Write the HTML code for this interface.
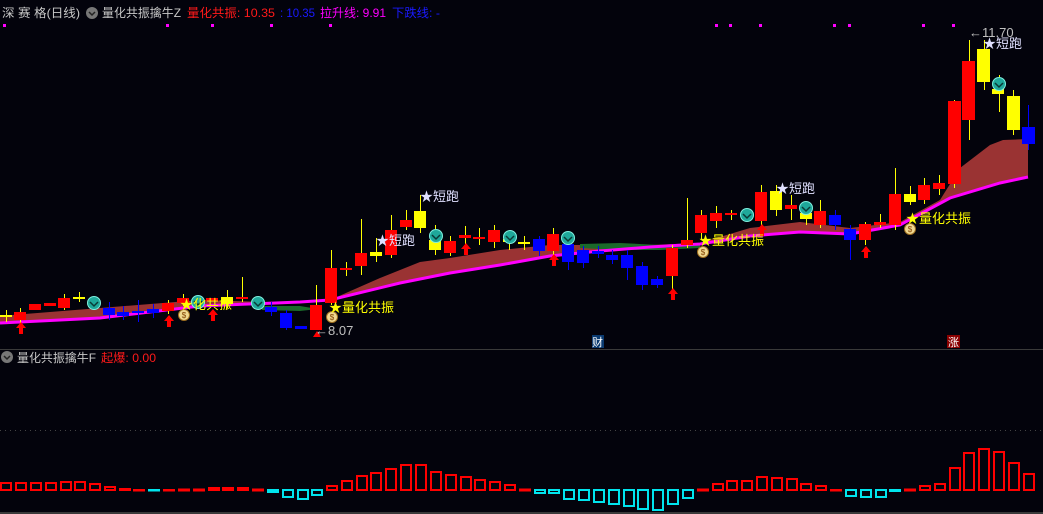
<!DOCTYPE html>
<html><head><meta charset="utf-8"><style>
html,body{margin:0;padding:0;background:#03030c;width:1043px;height:514px;overflow:hidden}
svg{display:block}
text{font-family:"Liberation Sans","Noto Sans CJK SC",sans-serif}
</style></head><body>
<svg width="1043" height="514" viewBox="0 0 1043 514" xmlns="http://www.w3.org/2000/svg">
<rect width="1043" height="514" fill="#03030c"/>
<!-- title -->
<text x="2" y="17" font-size="12" fill="#c8c8c8" textLength="78" lengthAdjust="spacingAndGlyphs">深 赛 格(日线)</text>
<circle cx="92" cy="13" r="6" fill="#777"/><path d="M89 12l3 3 3-3" stroke="#222" stroke-width="1.5" fill="none"/>
<text x="102" y="17" font-size="12" fill="#c8c8c8" textLength="79" lengthAdjust="spacingAndGlyphs">量化共振擒牛Z</text>
<text x="187" y="17" font-size="12" fill="#ff1a1a" textLength="88" lengthAdjust="spacingAndGlyphs">量化共振: 10.35</text>
<text x="280" y="17" font-size="12" fill="#1a1aff" textLength="35" lengthAdjust="spacingAndGlyphs">: 10.35</text>
<text x="320" y="17" font-size="12" fill="#ff00ff" textLength="66" lengthAdjust="spacingAndGlyphs">拉升线: 9.91</text>
<text x="392" y="17" font-size="12" fill="#1a1aff" textLength="48" lengthAdjust="spacingAndGlyphs">下跌线: -</text>
<g fill="#ff00ff">
<rect x="3" y="24" width="3" height="3"/><rect x="166" y="24" width="3" height="3"/><rect x="211" y="24" width="3" height="3"/><rect x="270" y="24" width="3" height="3"/><rect x="329" y="24" width="3" height="3"/>
<rect x="715" y="24" width="3" height="3"/><rect x="729" y="24" width="3" height="3"/><rect x="759" y="24" width="3" height="3"/><rect x="833" y="24" width="3" height="3"/><rect x="848" y="24" width="3" height="3"/><rect x="922" y="24" width="3" height="3"/><rect x="952" y="24" width="3" height="3"/>
</g>
<!-- ribbon -->
<path d="M0 316 L100 308 L200 300 L300 303 L330 300 L380 278 L420 262 L450 258 L500 250 L550 245 L600 245 L650 245 L700 243 L750 228 L800 222 L850 228 L900 222 L940 200 L960 168 L990 145 L1003 140 L1028 139 L1028 177 L1000 183 L950 198 L900 225 L850 234 L800 232 L750 236 L700 244 L650 247 L600 251 L550 256 L500 265 L450 273 L400 283 L330 300 L300 302 L200 306 L100 318 L0 323 Z" fill="#9a3333"/>
<path d="M580 244 L620 243 L660 245 L700 243 L700 248 L660 250 L620 250 L580 248Z" fill="#1a6a2a"/>
<path d="M262 306 L300 306 L318 309 L300 311 L262 310Z" fill="#1a6a2a"/>
<path d="M0 323 L100 318 L200 306 L300 302 L330 300 L400 283 L450 273 L500 265 L550 256 L600 251 L650 247 L700 244 L750 236 L800 232 L850 234 L900 225 L950 198 L1000 183 L1028 177" stroke="#ff00ff" stroke-width="3" fill="none"/>
<!-- candles: wicks -->
<g stroke-width="1" shape-rendering="crispEdges" transform="translate(0.5 0)">
<path stroke="#ff0" d="M6 310V322M20 308V324M64 294V310M79 292V302M168 300V314M183 294V306M227 290V308M242 277V302M316 285V330M331 250V305M346 262V276M361 219V275M376 238V262M391 215V258M406 210V230M420 195V233M435 225V255M450 236V256M465 226V248M479 228V245M494 225V248M509 235V250M524 236V250M553 228V262M672 245V300M687 198V248M701 210V240M716 206V228M731 210V220M761 185V230M776 185V216M791 195V220M806 203V225M820 200V228M865 222V245M880 214V228M895 168V230M910 186V205M924 178V204M939 175V195M954 100V188M969 40V140M984 40V90M999 75V112M1013 90V135"/>
<path stroke="#00f" d="M109 302V320M123 306V320M138 300V322M153 304V318M271 302V316M286 310V330M539 236V256M568 240V270M583 246V268M598 246V258M612 250V264M627 250V280M642 262V290M657 276V288M835 210V230M850 225V260M1028 105V150"/>
</g>
<g fill="#ff0000">
<rect x="14" y="312" width="12" height="8"/><rect x="29" y="304" width="12" height="6"/><rect x="44" y="303" width="12" height="3"/><rect x="58" y="298" width="12" height="10"/>
<rect x="162" y="303" width="12" height="8"/><rect x="177" y="298" width="12" height="5"/><rect x="206" y="298" width="12" height="3"/><rect x="236" y="297" width="12" height="2"/>
<rect x="310" y="305" width="12" height="25"/><rect x="325" y="268" width="12" height="35"/><rect x="340" y="268" width="12" height="2"/><rect x="355" y="253" width="12" height="13"/>
<rect x="385" y="230" width="12" height="25"/><rect x="400" y="220" width="12" height="7"/><rect x="444" y="241" width="12" height="12"/><rect x="459" y="235" width="12" height="3"/><rect x="473" y="237" width="12" height="2"/><rect x="488" y="230" width="12" height="12"/><rect x="547" y="234" width="12" height="17"/>
<rect x="666" y="248" width="12" height="28"/><rect x="681" y="240" width="12" height="5"/><rect x="695" y="215" width="12" height="18"/><rect x="710" y="213" width="12" height="8"/><rect x="725" y="213" width="12" height="2"/>
<rect x="755" y="192" width="12" height="29"/><rect x="785" y="205" width="12" height="4"/><rect x="814" y="211" width="12" height="14"/><rect x="859" y="224" width="12" height="16"/><rect x="874" y="222" width="12" height="3"/><rect x="889" y="194" width="12" height="31"/><rect x="918" y="185" width="12" height="15"/><rect x="933" y="183" width="12" height="6"/>
<rect x="948" y="101" width="13" height="83"/><rect x="962" y="61" width="13" height="59"/>
</g>
<g fill="#ffff00">
<rect x="0" y="315" width="12" height="2"/><rect x="73" y="297" width="12" height="2"/><rect x="221" y="297" width="12" height="7"/><rect x="370" y="252" width="12" height="4"/><rect x="414" y="211" width="12" height="17"/><rect x="429" y="240" width="12" height="10"/><rect x="503" y="239" width="12" height="3"/><rect x="518" y="242" width="12" height="2"/>
<rect x="770" y="191" width="12" height="19"/><rect x="800" y="213" width="12" height="6"/><rect x="904" y="194" width="12" height="8"/><rect x="977" y="49" width="13" height="33"/><rect x="992" y="89" width="12" height="5"/><rect x="1007" y="96" width="13" height="34"/>
</g>
<g fill="#0000ff">
<rect x="103" y="308" width="12" height="7"/><rect x="117" y="312" width="12" height="4"/><rect x="132" y="311" width="12" height="2"/><rect x="147" y="309" width="12" height="4"/><rect x="265" y="307" width="12" height="5"/><rect x="280" y="313" width="12" height="15"/><rect x="295" y="326" width="12" height="3"/>
<rect x="533" y="239" width="12" height="12"/><rect x="562" y="244" width="12" height="18"/><rect x="577" y="250" width="12" height="13"/><rect x="592" y="251" width="12" height="3"/><rect x="606" y="255" width="12" height="5"/><rect x="621" y="255" width="12" height="13"/><rect x="636" y="266" width="12" height="19"/><rect x="651" y="279" width="12" height="6"/>
<rect x="829" y="215" width="12" height="10"/><rect x="844" y="229" width="12" height="11"/><rect x="1022" y="127" width="13" height="17"/>
</g>
<!-- teal icons -->
<g fill="#1fa89a" stroke="#7ff0e0" stroke-width="1">
<circle cx="94" cy="303" r="6.5"/><circle cx="198" cy="302" r="6.5"/><circle cx="258" cy="303" r="6.5"/><circle cx="436" cy="236" r="6.5"/><circle cx="510" cy="237" r="6.5"/><circle cx="568" cy="238" r="6.5"/><circle cx="747" cy="215" r="6.5"/><circle cx="806" cy="208" r="6.5"/><circle cx="999" cy="84" r="6.5"/>
</g>
<g stroke="#0a3a36" stroke-width="1.5" fill="none">
<path d="M90 302l4 4 4-4M194 301l4 4 4-4M254 302l4 4 4-4M432 235l4 4 4-4M506 236l4 4 4-4M564 237l4 4 4-4M743 214l4 4 4-4M802 207l4 4 4-4M995 83l4 4 4-4"/>
</g>
<!-- money bags -->
<g fill="#f0d890" stroke="#a07020">
<circle cx="184" cy="315" r="5.5"/><circle cx="332" cy="317" r="5.5"/><circle cx="703" cy="252" r="5.5"/><circle cx="910" cy="229" r="5.5"/>
</g>
<g font-size="8" fill="#804000" text-anchor="middle"><text x="184" y="318">$</text><text x="332" y="320">$</text><text x="703" y="255">$</text><text x="910" y="232">$</text></g>
<!-- red arrows -->
<g fill="#ff0000">
<path d="M21 322l-5 6h3v6h4v-6h3z"/><path d="M169 315l-5 6h3v6h4v-6h3z"/><path d="M213 309l-5 6h3v6h4v-6h3z"/><path d="M317 331l-4 6h8z"/><path d="M466 243l-5 6h3v6h4v-6h3z"/><path d="M554 254l-5 6h3v6h4v-6h3z"/><path d="M673 288l-5 6h3v6h4v-6h3z"/><path d="M762 224l-5 6h3v6h4v-6h3z"/><path d="M866 246l-5 6h3v6h4v-6h3z"/>
</g>
<!-- labels -->
<g font-size="13">
<text x="180" y="309" fill="#ffff00">★化共振</text>
<text x="329" y="312" fill="#ffff00">★量化共振</text>
<text x="699" y="245" fill="#ffff00">★量化共振</text>
<text x="906" y="223" fill="#ffff00">★量化共振</text>
<text x="420" y="201" fill="#e0e0ff">★短跑</text>
<text x="376" y="245" fill="#e0e0ff">★短跑</text>
<text x="776" y="193" fill="#e0e0ff">★短跑</text>
<text x="983" y="48" fill="#e0e0ff">★短跑</text>
<text x="315" y="335" fill="#c0c0c0">←8.07</text>
<text x="969" y="37" fill="#c0c0c0">←11.70</text>
</g>
<!-- separator -->
<rect x="0" y="349" width="1043" height="1" fill="#3a3a3a"/>
<rect x="592" y="335" width="12" height="13" fill="#0a3a70"/><text x="592" y="346" font-size="11" fill="#fff">财</text>
<rect x="947" y="335" width="13" height="13" fill="#8a0000"/><text x="948" y="346" font-size="11" fill="#fff">涨</text>
<!-- bottom panel -->
<circle cx="7" cy="357" r="6" fill="#777"/><path d="M4 356l3 3 3-3" stroke="#222" stroke-width="1.5" fill="none"/>
<text x="17" y="362" font-size="12" fill="#c8c8c8" textLength="79" lengthAdjust="spacingAndGlyphs">量化共振擒牛F</text>
<text x="101" y="362" font-size="12" fill="#ff1a1a" textLength="55" lengthAdjust="spacingAndGlyphs">起爆: 0.00</text>
<line x1="0" y1="430.5" x2="1043" y2="430.5" stroke="#444" stroke-dasharray="1 4"/>
<rect x="0" y="512" width="1043" height="2" fill="#3a3a3a"/>
<g fill="none" stroke="#ff0000" stroke-width="2" shape-rendering="crispEdges">
<rect x="1" y="483" width="10" height="7"/><rect x="16" y="483" width="10" height="7"/><rect x="31" y="483" width="10" height="7"/><rect x="46" y="483" width="10" height="7"/><rect x="61" y="482" width="10" height="8"/><rect x="75" y="482" width="10" height="8"/><rect x="90" y="484" width="10" height="6"/><rect x="105" y="487" width="10" height="3"/><rect x="120" y="489" width="10" height="1"/><rect x="134" y="490" width="10" height="0.5"/>
<rect x="164" y="490" width="10" height="0.5"/><rect x="179" y="489.5" width="10" height="1"/><rect x="194" y="489.5" width="10" height="1"/><rect x="209" y="488" width="10" height="2"/><rect x="223" y="488" width="10" height="2"/><rect x="238" y="488" width="10" height="2"/><rect x="253" y="489.5" width="10" height="1"/>
<rect x="327" y="486" width="10" height="4"/><rect x="342" y="481" width="10" height="9"/><rect x="357" y="476" width="10" height="14"/><rect x="371" y="473" width="10" height="17"/><rect x="386" y="469" width="10" height="21"/>
<rect x="401" y="465" width="10" height="25"/><rect x="416" y="465" width="10" height="25"/><rect x="431" y="472" width="10" height="18"/><rect x="446" y="475" width="10" height="15"/><rect x="461" y="477" width="10" height="13"/><rect x="475" y="480" width="10" height="10"/><rect x="490" y="482" width="10" height="8"/><rect x="505" y="485" width="10" height="5"/><rect x="520" y="489.5" width="10" height="1"/>
<rect x="698" y="489.5" width="10" height="1"/><rect x="713" y="484" width="10" height="6"/><rect x="727" y="481" width="10" height="9"/><rect x="742" y="481" width="10" height="9"/><rect x="757" y="477" width="10" height="13"/><rect x="772" y="478" width="10" height="12"/><rect x="787" y="479" width="10" height="11"/><rect x="801" y="484" width="10" height="6"/><rect x="816" y="486" width="10" height="4"/><rect x="831" y="490" width="10" height="0.5"/>
<rect x="905" y="489.5" width="10" height="1"/><rect x="920" y="486" width="10" height="4"/><rect x="935" y="484" width="10" height="6"/><rect x="950" y="468" width="10" height="22"/><rect x="964" y="453" width="10" height="37"/><rect x="979" y="449" width="10" height="41"/><rect x="994" y="452" width="10" height="38"/><rect x="1009" y="463" width="10" height="27"/><rect x="1024" y="474" width="10" height="16"/>
</g>
<g fill="none" stroke="#00e5ee" stroke-width="2" shape-rendering="crispEdges">
<rect x="149" y="490" width="10" height="0.5"/><rect x="268" y="490" width="10" height="2"/><rect x="283" y="490" width="10" height="7"/><rect x="298" y="490" width="10" height="9"/><rect x="312" y="490" width="10" height="5"/>
<rect x="535" y="490" width="10" height="3"/><rect x="549" y="490" width="10" height="3"/><rect x="564" y="490" width="10" height="9"/><rect x="579" y="490" width="10" height="10"/><rect x="594" y="490" width="10" height="12"/><rect x="609" y="490" width="10" height="14"/><rect x="624" y="490" width="10" height="16"/><rect x="638" y="490" width="10" height="19"/><rect x="653" y="490" width="10" height="20"/><rect x="668" y="490" width="10" height="14"/><rect x="683" y="490" width="10" height="8"/>
<rect x="846" y="490" width="10" height="6"/><rect x="861" y="490" width="10" height="7"/><rect x="876" y="490" width="10" height="7"/><rect x="890" y="490" width="10" height="1"/>
</g>
</svg>
</body></html>
